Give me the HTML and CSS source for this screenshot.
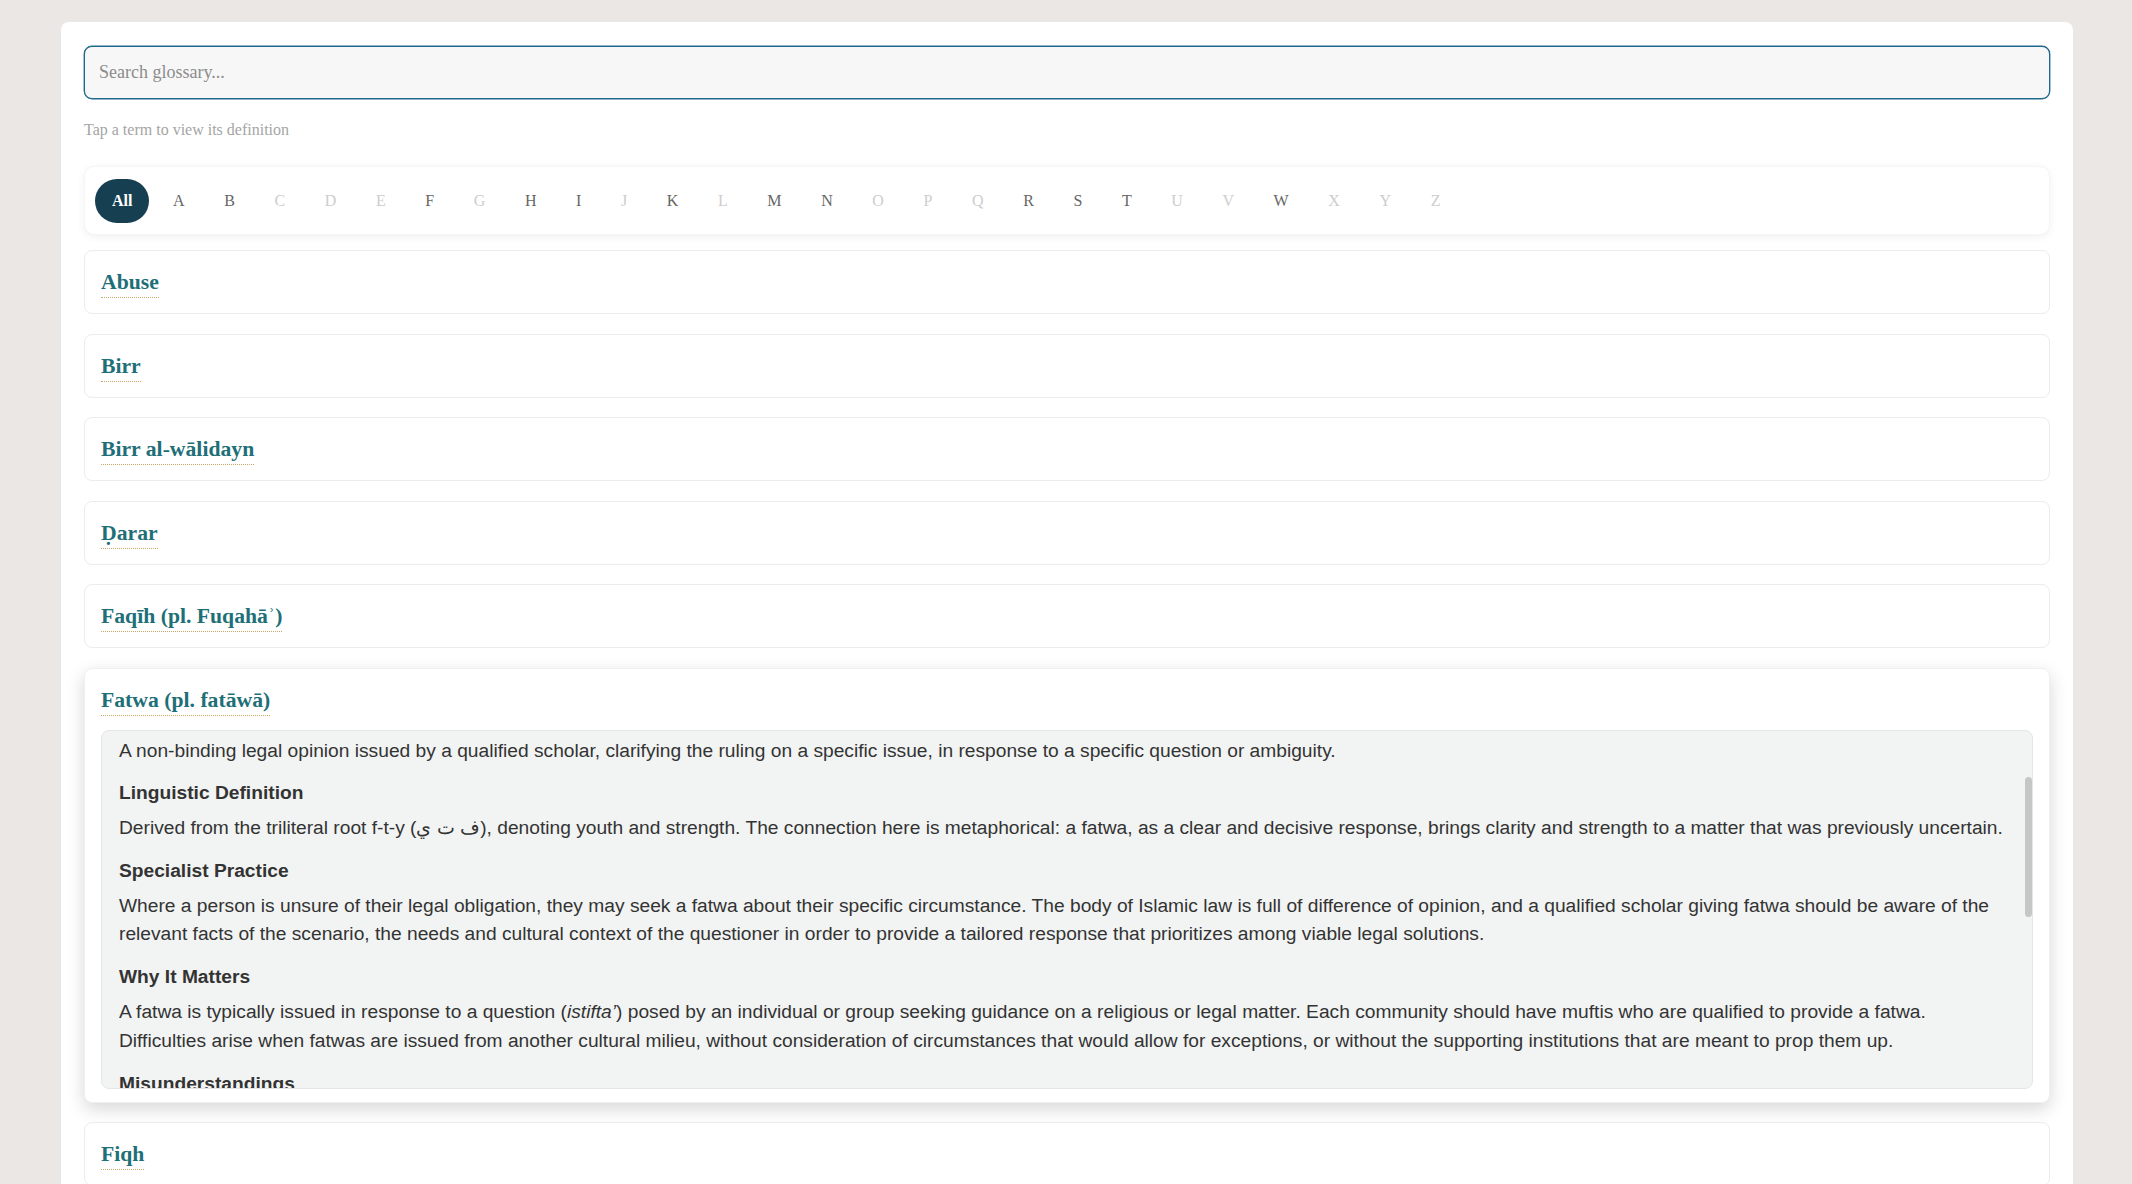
FILE: index.html
```html
<!DOCTYPE html>
<html lang="en">
<head>
<meta charset="utf-8">
<title>Glossary</title>
<link rel="stylesheet" href="styles.css">
</head>
<body>
<div class="page">
  <main class="glossary">
    <input class="search" type="text" placeholder="Search glossary...">
    <p class="hint">Tap a term to view its definition</p>
    <nav class="letters">
      <button class="letter active">All</button>
      <button class="letter">A</button>
      <button class="letter">B</button>
      <button class="letter off">C</button>
      <button class="letter off">D</button>
      <button class="letter off">E</button>
      <button class="letter">F</button>
      <button class="letter off">G</button>
      <button class="letter">H</button>
      <button class="letter">I</button>
      <button class="letter off">J</button>
      <button class="letter">K</button>
      <button class="letter off">L</button>
      <button class="letter">M</button>
      <button class="letter">N</button>
      <button class="letter off">O</button>
      <button class="letter off">P</button>
      <button class="letter off">Q</button>
      <button class="letter">R</button>
      <button class="letter">S</button>
      <button class="letter">T</button>
      <button class="letter off">U</button>
      <button class="letter off">V</button>
      <button class="letter">W</button>
      <button class="letter off">X</button>
      <button class="letter off">Y</button>
      <button class="letter off">Z</button>
    </nav>
    <ul class="terms">
      <li class="term"><div class="term-head"><span class="term-title">Abuse</span></div></li>
      <li class="term"><div class="term-head"><span class="term-title">Birr</span></div></li>
      <li class="term"><div class="term-head"><span class="term-title">Birr al-wālidayn</span></div></li>
      <li class="term"><div class="term-head"><span class="term-title">Ḍarar</span></div></li>
      <li class="term"><div class="term-head"><span class="term-title">Faqīh (pl. Fuqahāʾ)</span></div></li>
      <li class="term open">
        <div class="term-head"><span class="term-title">Fatwa (pl. fatāwā)</span></div>
        <div class="definition">
          <div class="def-body">
            <p>A non-binding legal opinion issued by a qualified scholar, clarifying the ruling on a specific issue, in response to a specific question or ambiguity.</p>
            <h4>Linguistic Definition</h4>
            <p>Derived from the triliteral root f-t-y (ف ت ي), denoting youth and strength. The connection here is metaphorical: a fatwa, as a clear and decisive response, brings clarity and strength to a matter that was previously uncertain.</p>
            <h4>Specialist Practice</h4>
            <p>Where a person is unsure of their legal obligation, they may seek a fatwa about their specific circumstance. The body of Islamic law is full of difference of opinion, and a qualified scholar giving fatwa should be aware of the relevant facts of the scenario, the needs and cultural context of the questioner in order to provide a tailored response that prioritizes among viable legal solutions.</p>
            <h4>Why It Matters</h4>
            <p>A fatwa is typically issued in response to a question (<em>istifta’</em>) posed by an individual or group seeking guidance on a religious or legal matter. Each community should have muftis who are qualified to provide a fatwa. Difficulties arise when fatwas are issued from another cultural milieu, without consideration of circumstances that would allow for exceptions, or without the supporting institutions that are meant to prop them up.</p>
            <h4>Misunderstandings</h4>
            <p>A fatwa is often mistaken for a binding ruling that applies to everyone.</p>
          </div>
          <div class="scroll-thumb"></div>
        </div>
      </li>
      <li class="term"><div class="term-head"><span class="term-title">Fiqh</span></div></li>
    </ul>
  </main>
</div>
</body>
</html>
```

FILE: styles.css
```css
html {
  scrollbar-width: none;
}
html::-webkit-scrollbar {
  display: none;
}
* {
  box-sizing: border-box;
}
body {
  margin: 0;
  background: #eae7e4;
  font-family: "Liberation Serif", "Times New Roman", serif;
  color: #333;
}
.page {
  padding: 22px 59px 0 61px;
}
.glossary {
  max-width: 2012px;
  margin: 0 auto;
  background: #ffffff;
  border-radius: 8px;
  padding: 24px 23px 24px 23px;
}
.search {
  display: block;
  width: 100%;
  height: 53px;
  padding: 0 14px;
  background: #f7f7f7;
  border: 1px solid #1f6a8c;
  box-shadow: 0 0 0 0.4px #1f6a8c;
  border-radius: 8px;
  font-family: "Liberation Serif", "Times New Roman", serif;
  font-size: 18px;
  color: #333;
  outline: none;
}
.search::placeholder {
  color: #8c8c8c;
}
.hint {
  margin: 20px 0 25px;
  font-size: 16px;
  line-height: 22px;
  color: #a5a5a5;
}
.letters {
  display: flex;
  align-items: center;
  gap: 7.6px;
  padding: 12px 10px 11px;
  background: #fff;
  border: 1px solid #f5f5f5;
  border-radius: 10px;
  box-shadow: 0 2px 8px rgba(0, 0, 0, 0.06);
}
.letter {
  height: 44px;
  padding: 0 16px;
  border: none;
  background: transparent;
  border-radius: 22px;
  font-family: "Liberation Serif", "Times New Roman", serif;
  font-size: 16px;
  color: #666;
  cursor: pointer;
}
.letter.off {
  color: #cdcdcd;
}
.letter.active {
  padding: 0 17px;
  background: #163f52;
  color: #ffffff;
  font-weight: bold;
}
.terms {
  list-style: none;
  margin: 15px 0 0;
  padding: 0;
  display: flex;
  flex-direction: column;
  gap: 19.5px;
}
.term {
  background: #fff;
  border: 1px solid #ececec;
  border-radius: 8px;
  padding: 16px 16px 15px;
}
.term.open {
  padding-bottom: 13px;
  border-color: #f0f0f0;
  box-shadow: 0 6px 18px rgba(0, 0, 0, 0.16);
}
.term-head {
  line-height: 0;
}
.term-title {
  display: inline-block;
  font-family: "Liberation Serif", "Times New Roman", serif;
  font-weight: bold;
  font-size: 21.7px;
  line-height: 30px;
  color: #1e6f78;
  border-bottom: 1px dotted #c9a96a;
}
.definition {
  position: relative;
  margin-top: 14px;
  height: 359px;
  background: #f2f3f3;
  border: 1px solid #e6e6e6;
  border-radius: 8px;
  overflow: hidden;
}
.def-body {
  padding: 6px 18px 16px 17px;
  font-family: "Liberation Sans", Arial, sans-serif;
  font-size: 19.2px;
  line-height: 28.8px;
  color: #333;
}
.def-body p {
  margin: 0;
}
.def-body h4 {
  margin: 14px 0 6px;
  font-size: 19.2px;
  line-height: 28.8px;
  font-weight: bold;
  color: #333;
}
.scroll-thumb {
  position: absolute;
  top: 46px;
  right: 0;
  width: 7px;
  height: 140px;
  border-radius: 4px;
  background: #c6c6c6;
}
```
